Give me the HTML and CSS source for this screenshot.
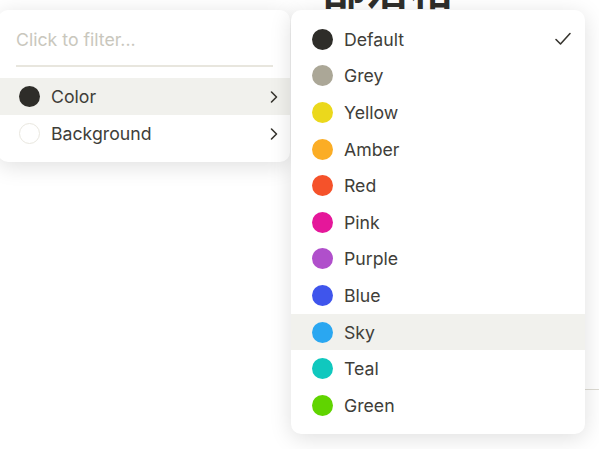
FILE: index.html
```html
<!DOCTYPE html>
<html lang="en">
<head>
  <meta charset="UTF-8">
  <meta name="viewport" content="width=device-width, initial-scale=1.0">
  <title>Text color</title>
  <link rel="stylesheet" href="styles.css">
</head>
<body>
  <div class="page">
    <h1 class="title">部落格</h1>
    <div class="rule"></div>
  </div>

  <div class="menu">
    <div class="filter">Click to filter...</div>
    <div class="items">
      <div class="item active">
        <span class="dot dot-default"></span>
        <span class="label">Color</span>
        <svg class="chevron" width="16" height="16" viewBox="0 0 16 16"><path d="M5.5 3l5 5-5 5"/></svg>
      </div>
      <div class="item">
        <span class="dot dot-bg"></span>
        <span class="label">Background</span>
        <svg class="chevron" width="16" height="16" viewBox="0 0 16 16"><path d="M5.5 3l5 5-5 5"/></svg>
      </div>
    </div>
  </div>

  <div class="submenu">
    <div class="item">
      <span class="dot dot-default"></span>
      <span class="label">Default</span>
      <svg class="check" width="18" height="16" viewBox="0 0 18 16"><path d="M2 8.5l4.5 4.5L16 2.5"/></svg>
    </div>
    <div class="item"><span class="dot dot-grey"></span><span class="label">Grey</span></div>
    <div class="item"><span class="dot dot-yellow"></span><span class="label">Yellow</span></div>
    <div class="item"><span class="dot dot-amber"></span><span class="label">Amber</span></div>
    <div class="item"><span class="dot dot-red"></span><span class="label">Red</span></div>
    <div class="item"><span class="dot dot-pink"></span><span class="label">Pink</span></div>
    <div class="item"><span class="dot dot-purple"></span><span class="label">Purple</span></div>
    <div class="item"><span class="dot dot-blue"></span><span class="label">Blue</span></div>
    <div class="item active"><span class="dot dot-sky"></span><span class="label">Sky</span></div>
    <div class="item"><span class="dot dot-teal"></span><span class="label">Teal</span></div>
    <div class="item"><span class="dot dot-green"></span><span class="label">Green</span></div>
  </div>
</body>
</html>
```

FILE: styles.css
```css
* {
  margin: 0;
  padding: 0;
  box-sizing: border-box;
}

body {
  font-family: Inter, "Noto Sans", sans-serif;
  background-color: #fff;
  color: #403e39;
  overflow: hidden;
}

.page {
  padding-left: 322px;
}

.title {
  font-family: "Noto Sans CJK TC", "Noto Sans CJK SC", sans-serif;
  font-size: 44px;
  font-weight: 700;
  line-height: 44px;
  margin-top: -36px;
  color: #2f2e2a;
}

.rule {
  margin-top: 381px;
  margin-left: 80px;
  border-top: 1px solid #dddbd3;
}

.menu,
.submenu {
  position: absolute;
  top: 10px;
  background-color: #fff;
  border-radius: 10px;
  box-shadow: 0 4px 22px rgba(0, 0, 0, 0.13);
}

.menu {
  left: -2px;
  width: 292px;
  padding-bottom: 10px;
}

.submenu {
  left: 291px;
  width: 294px;
  padding: 11px 0 10px;
}

.filter {
  margin: 0 17px 0 18px;
  padding: 18px 0 13px;
  font-size: 17.7px;
  line-height: 24px;
  color: #c9c7bd;
  border-bottom: 2px solid #e8e6de;
}

.items {
  margin-top: 11px;
}

.item {
  display: flex;
  align-items: center;
  height: 37px;
  padding: 0 8.5px 0 21px;
  font-size: 17.7px;
}

.submenu .item {
  height: 36.6px;
  padding-right: 13px;
}

.item.active {
  background-color: #f1f1ed;
}

.label {
  flex: 1;
  margin-left: 11px;
}

.dot {
  width: 21px;
  height: 21px;
  border-radius: 50%;
  flex-shrink: 0;
}

.dot-default { background-color: #2e2d29; }
.dot-bg { background-color: #fff; border: 1px solid #e9e7df; }
.dot-grey { background-color: #aba797; }
.dot-yellow { background-color: #ebd81c; }
.dot-amber { background-color: #fbad25; }
.dot-red { background-color: #f5522a; }
.dot-pink { background-color: #e5179a; }
.dot-purple { background-color: #b04fcb; }
.dot-blue { background-color: #3f55ec; }
.dot-sky { background-color: #2aa7f1; }
.dot-teal { background-color: #10c8be; }
.dot-green { background-color: #60d400; }

.chevron path,
.check path {
  fill: none;
  stroke: #37352f;
  stroke-width: 1.6;
  stroke-linecap: round;
  stroke-linejoin: round;
}
```
